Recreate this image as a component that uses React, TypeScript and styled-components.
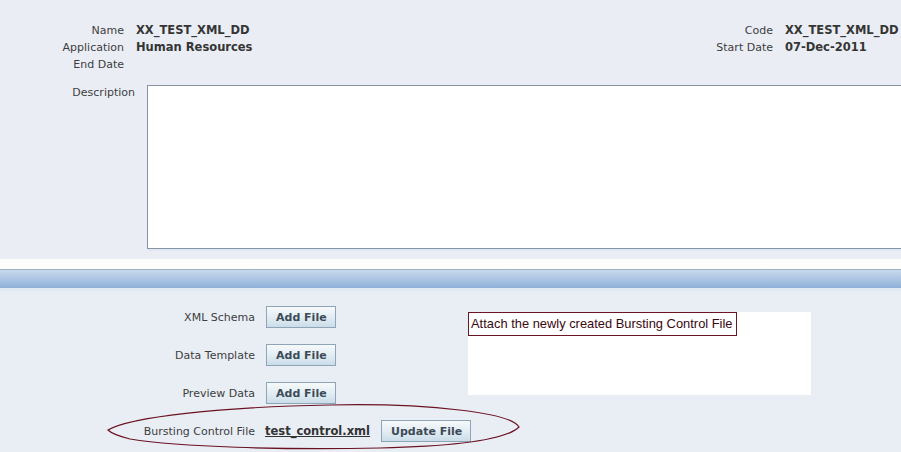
import React from "react";
import styled, { createGlobalStyle } from "styled-components";

const GlobalStyle = createGlobalStyle`
  html, body {
    margin: 0;
    padding: 0;
    background: #e9eef5;
  }
  body {
    font-family: "DejaVu Sans", Verdana, sans-serif;
    font-size: 11px;
    color: #3c3c3c;
  }
`;

const Page = styled.div`
  width: 901px;
  height: 452px;
  overflow: hidden;
  background: #e9eef5;
`;

const TopSection = styled.section`
  padding: 22px 0 10px 0;
  background: #eaeef4;
`;

const InfoGrid = styled.div`
  display: grid;
  grid-template-columns: 124px 501px 124px 1fr;
  column-gap: 12px;
  grid-auto-rows: 17px;
  align-items: center;
`;

const Label = styled.div`
  text-align: right;
  color: #3d3d3d;
  white-space: nowrap;
  line-height: 17px;
`;

const Value = styled.div`
  font-weight: bold;
  font-size: 11.5px;
  color: #353535;
  white-space: nowrap;
  line-height: 17px;
`;

const DescRow = styled.div`
  display: grid;
  grid-template-columns: 135px 1fr;
  column-gap: 12px;
  margin-top: 12px;
`;

const DescLabel = styled.div`
  text-align: right;
  color: #3d3d3d;
  line-height: 15px;
`;

const DescArea = styled.textarea`
  display: block;
  width: 790px;
  height: 164px;
  box-sizing: border-box;
  margin: 0;
  border: 1px solid #8794a2;
  background: #ffffff;
  resize: none;
  box-shadow: 0 2px 0 #dfe8f4;
  font-family: "DejaVu Sans", sans-serif;
`;

const WhiteStrip = styled.div`
  height: 10px;
  background: #fdfdfb;
`;

const Band = styled.div`
  height: 18px;
  border-top: 1px solid #9fb3c6;
  background: linear-gradient(#c8d9ed, #a9c3e2 55%, #8fb0d7);
`;

const BandShadow = styled.div`
  height: 3px;
  background: #dfe8f3;
`;

const BottomSection = styled.section`
  position: relative;
  padding-top: 7px;
  height: 160px;
  background: #e9eef5;
`;

const FileGrid = styled.div`
  display: grid;
  grid-template-columns: 255px 213px 343px;
  grid-auto-rows: 38px;
  align-items: center;
`;

const FileLabel = styled.div`
  text-align: right;
  color: #3d3d3d;
  white-space: nowrap;
`;

const Controls = styled.div<{ $span?: boolean }>`
  display: flex;
  align-items: center;
  gap: 11px;
  padding-left: ${(p) => (p.$span ? "10px" : "11px")};
  grid-column: ${(p) => (p.$span ? "2 / 4" : "2 / 3")};
`;

const Button = styled.button`
  height: 22px;
  box-sizing: border-box;
  padding: 0 8px 0 9px;
  border: 1px solid #8ea5b8;
  background: linear-gradient(#f6f9fb, #e3edf3 50%, #cadde9);
  font-family: "DejaVu Sans", Verdana, sans-serif;
  font-size: 11px;
  font-weight: bold;
  color: #3d4a58;
  cursor: pointer;
`;

const FileLink = styled.a`
  font-weight: bold;
  font-size: 11.5px;
  color: #333333;
  text-decoration: underline;
  white-space: nowrap;
`;

const NoteArea = styled.div`
  grid-column: 3 / 4;
  grid-row: 1 / 4;
  align-self: start;
  margin-top: 14px;
  height: 83px;
  background: #ffffff;
`;

const Callout = styled.div`
  display: inline-block;
  box-sizing: border-box;
  height: 24px;
  width: 269px;
  padding: 3px 0 0 2px;
  border: 1px solid #6a1424;
  font-family: "Liberation Sans", Arial, sans-serif;
  font-size: 12.9px;
  color: #3a0810;
  white-space: nowrap;
`;

const Highlight = styled.svg`
  position: absolute;
  left: 100px;
  top: 110px;
  width: 430px;
  height: 52px;
  pointer-events: none;
`;

const topRows = [
  { l: "Name", v: "XX_TEST_XML_DD", l2: "Code", v2: "XX_TEST_XML_DD" },
  { l: "Application", v: "Human Resources", l2: "Start Date", v2: "07-Dec-2011" },
  { l: "End Date", v: "", l2: "", v2: "" },
];

export default function App() {
  return (
    <Page>
      <GlobalStyle />
      <TopSection>
        <InfoGrid>
          {topRows.map((r) => (
            <React.Fragment key={r.l}>
              <Label>{r.l}</Label>
              <Value>{r.v}</Value>
              <Label>{r.l2}</Label>
              <Value>{r.v2}</Value>
            </React.Fragment>
          ))}
        </InfoGrid>
        <DescRow>
          <DescLabel>Description</DescLabel>
          <DescArea readOnly />
        </DescRow>
      </TopSection>
      <WhiteStrip />
      <Band />
      <BandShadow />
      <BottomSection>
        <FileGrid>
          <FileLabel>XML Schema</FileLabel>
          <Controls>
            <Button>Add File</Button>
          </Controls>
          <NoteArea>
            <Callout>Attach the newly created Bursting Control File</Callout>
          </NoteArea>
          <FileLabel>Data Template</FileLabel>
          <Controls>
            <Button>Add File</Button>
          </Controls>
          <FileLabel>Preview Data</FileLabel>
          <Controls>
            <Button>Add File</Button>
          </Controls>
          <FileLabel>Bursting Control File</FileLabel>
          <Controls $span>
            <FileLink href="#">test_control.xml</FileLink>
            <Button>Update File</Button>
          </Controls>
        </FileGrid>
        <Highlight viewBox="0 0 430 52">
          <path
            d="M 8 29 C 30 16, 120 6, 230 4 C 330 2, 412 12, 419 26 C 408 37, 370 45, 280 47 C 180 49, 80 46, 30 38 C 18 35, 10 31, 8 29 Z"
            fill="none"
            stroke="#6b1222"
            strokeWidth="1.2"
          />
        </Highlight>
      </BottomSection>
    </Page>
  );
}
